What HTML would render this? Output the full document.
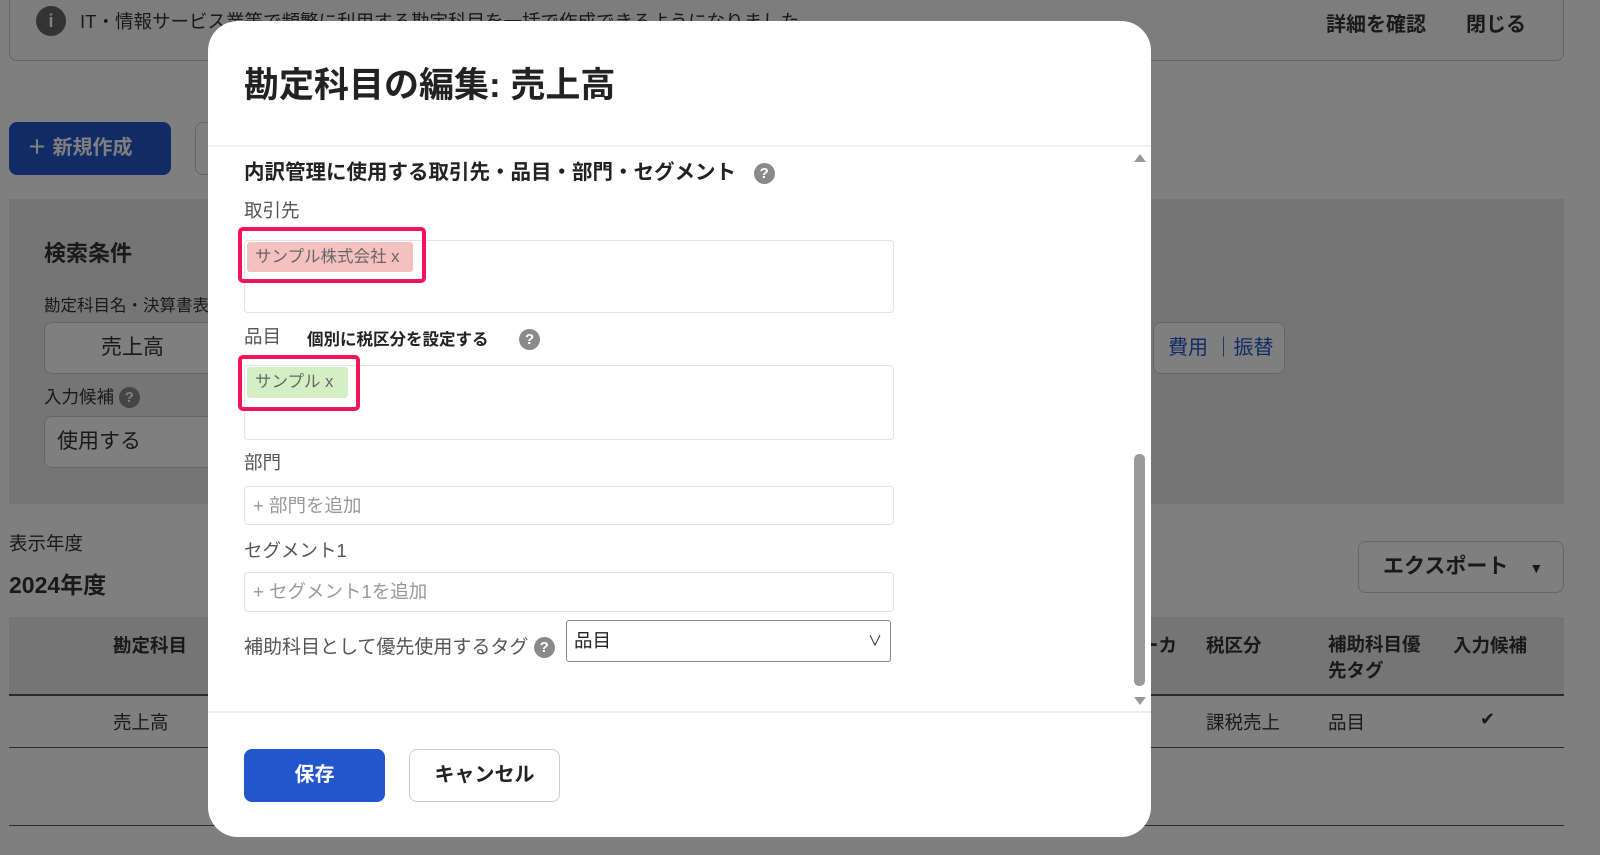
<!DOCTYPE html>
<html><head><meta charset="utf-8"><style>
*{box-sizing:border-box;margin:0;padding:0}
body{width:1600px;height:855px;overflow:hidden;position:relative;background:#fff;font-family:"Liberation Sans","Noto Sans CJK JP",sans-serif;color:#333}
.a{position:absolute}
.ov{position:absolute;left:0;top:0;width:1600px;height:855px;background:rgba(0,0,0,0.5)}
.modal{position:absolute;left:208px;top:21px;width:943px;height:816px;background:#fff;border-radius:30px;overflow:hidden}
.lbl{position:absolute;font-size:18.5px;color:#555}
.box{position:absolute;border:1px solid #e3e3e3;border-radius:4px;background:#fff}
.hl{position:absolute;border:4px solid #f0145a;border-radius:5px}
.q{display:inline-block;width:21px;height:21px;border-radius:50%;background:#8a8a8a;color:#fff;font-size:15px;font-weight:bold;text-align:center;line-height:21px;vertical-align:1px}
.btn{position:absolute;border-radius:8px;font-size:20px;font-weight:bold;text-align:center}
</style></head><body>
<div class="a" style="left:9px;top:-5px;width:1555px;height:66px;border:1px solid #ccc;border-radius:8px;background:#fafafa"></div>
<div class="a" style="left:36px;top:6px;width:30px;height:30px;border-radius:50%;background:#666;color:#fff;text-align:center;font-weight:bold;font-size:18px;line-height:30px">i</div>
<div class="a" style="left:80px;top:8px;font-size:18.5px;color:#333">IT・情報サービス業等で頻繁に利用する勘定科目を一括で作成できるようになりました</div>
<div class="a" style="left:1326px;top:8px;font-size:20px;font-weight:bold">詳細を確認</div>
<div class="a" style="left:1466px;top:8px;font-size:20px;font-weight:bold">閉じる</div>
<div class="a" style="left:9px;top:122px;width:162px;height:53px;border-radius:8px;background:#2356cc;color:#fff;font-size:20px;font-weight:bold;line-height:53px;padding-left:18px">＋ 新規作成</div>
<div class="a" style="left:195px;top:122px;width:40px;height:53px;border:1px solid #ccc;border-radius:8px"></div>
<div class="a" style="left:9px;top:199px;width:1555px;height:305px;background:#ebebeb"></div>
<div class="a" style="left:44px;top:236px;font-size:22px;font-weight:bold">検索条件</div>
<div class="a" style="left:44px;top:292px;font-size:16.5px">勘定科目名・決算書表示名</div>
<div class="a" style="left:44px;top:322px;width:200px;height:52px;border:1px solid #ccc;border-radius:8px;background:#fff;font-size:21px;line-height:50px;padding-left:56px">売上高</div>
<div class="a" style="left:1153px;top:322px;width:132px;height:52px;border:1px solid #ccc;border-radius:8px;background:#fff;font-size:20px;line-height:50px;color:#2356cc;padding-left:14px">費用 ｜振替</div>
<div class="a" style="left:44px;top:384px;font-size:17.5px">入力候補 <span class="q">?</span></div>
<div class="a" style="left:44px;top:416px;width:200px;height:52px;border:1px solid #ccc;border-radius:8px;background:#fff;font-size:21px;line-height:50px;padding-left:12px">使用する</div>
<div class="a" style="left:9px;top:530px;font-size:18.5px">表示年度</div>
<div class="a" style="left:9px;top:566px;font-size:23px;font-weight:bold">2024年度</div>
<div class="a" style="left:1358px;top:541px;width:206px;height:52px;border:1px solid #ccc;border-radius:8px;background:#fff;font-size:21px;font-weight:bold;line-height:50px;padding-left:24px">エクスポート　<span style="font-size:14px">▼</span></div>
<div class="a" style="left:9px;top:617px;width:1555px;height:79px;background:#ebebeb;border-bottom:2px solid #555"></div>
<div class="a" style="left:113px;top:632px;font-size:18.5px;font-weight:bold">勘定科目</div>
<div class="a" style="left:1140px;top:632px;font-size:18.5px;font-weight:bold">ーカ</div>
<div class="a" style="left:1206px;top:632px;font-size:18.5px;font-weight:bold">税区分</div>
<div class="a" style="left:1328px;top:632px;font-size:18.5px;font-weight:bold;line-height:26px">補助科目優<br>先タグ</div>
<div class="a" style="left:1453px;top:632px;font-size:18.5px;font-weight:bold">入力候補</div>
<div class="a" style="left:113px;top:709px;font-size:18.5px">売上高</div>
<div class="a" style="left:1206px;top:709px;font-size:18.5px">課税売上</div>
<div class="a" style="left:1328px;top:709px;font-size:18.5px">品目</div>
<div class="a" style="left:1480px;top:709px;font-size:18px">✔</div>
<div class="a" style="left:9px;top:747px;width:1555px;height:1px;background:#555"></div>
<div class="a" style="left:9px;top:825px;width:1555px;height:1px;background:#555"></div>
<div class="ov"></div>
<div class="modal">
<div class="a" style="left:36px;top:36px;font-size:35px;font-weight:bold;color:#222">勘定科目の編集: 売上高</div>
<div class="a" style="left:0;top:124px;width:943px;height:2px;background:#eee"></div>
<div class="a" style="left:36px;top:134px;font-size:20.5px;font-weight:bold;color:#222">内訳管理に使用する取引先・品目・部門・セグメント <span class="q" style="margin-left:12px">?</span></div>
<div class="lbl" style="left:36px;top:176px">取引先</div>
<div class="box" style="left:36px;top:219px;width:650px;height:73px"></div>
<div class="a" style="left:39px;top:221px;width:166px;height:30px;background:#f5c0c0;border-radius:3px;font-size:16.5px;color:#666;line-height:30px;padding-left:8px">サンプル株式会社 x</div>
<div class="hl" style="left:30px;top:206px;width:188px;height:56px"></div>
<div class="lbl" style="left:36px;top:302px">品目</div>
<div class="a" style="left:99px;top:305px;font-size:16.5px;font-weight:bold;color:#222">個別に税区分を設定する <span class="q" style="margin-left:26px">?</span></div>
<div class="box" style="left:36px;top:344px;width:650px;height:75px"></div>
<div class="a" style="left:39px;top:346px;width:101px;height:31px;background:#d5efc4;border-radius:3px;font-size:16.5px;color:#666;line-height:31px;padding-left:8px">サンプル x</div>
<div class="hl" style="left:30px;top:334px;width:122px;height:56px"></div>
<div class="lbl" style="left:36px;top:428px">部門</div>
<div class="box" style="left:36px;top:465px;width:650px;height:39px;font-size:18.5px;color:#999;line-height:37px;padding-left:8px">+ 部門を追加</div>
<div class="lbl" style="left:36px;top:516px">セグメント1</div>
<div class="box" style="left:36px;top:551px;width:650px;height:40px;font-size:18.5px;color:#999;line-height:38px;padding-left:8px">+ セグメント1を追加</div>
<div class="lbl" style="left:36px;top:611px;font-size:19px">補助科目として優先使用するタグ <span class="q">?</span></div>
<div class="a" style="left:358px;top:599px;width:325px;height:42px;border:1px solid #888;border-radius:3px;font-size:18.5px;line-height:40px;padding-left:7px;color:#222">品目<span style="position:absolute;right:8px;top:0;font-size:14px">∨</span></div>
<div class="a" style="left:926px;top:133px;width:0;height:0;border-left:6px solid transparent;border-right:6px solid transparent;border-bottom:8px solid #999"></div>
<div class="a" style="left:926px;top:433px;width:11px;height:232px;background:#9a9a9a;border-radius:5px"></div>
<div class="a" style="left:926px;top:676px;width:0;height:0;border-left:6px solid transparent;border-right:6px solid transparent;border-top:8px solid #999"></div>
<div class="a" style="left:0;top:690px;width:943px;height:2px;background:#eee"></div>
<div class="btn" style="left:36px;top:728px;width:141px;height:53px;background:#2356cc;color:#fff;line-height:53px">保存</div>
<div class="btn" style="left:201px;top:728px;width:151px;height:53px;border:1px solid #ccc;color:#222;line-height:51px">キャンセル</div>
</div>
</body></html>
